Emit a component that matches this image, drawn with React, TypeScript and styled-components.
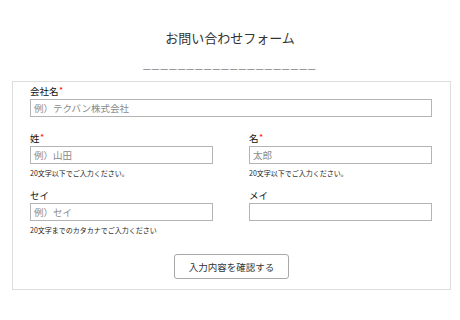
import React from "react";
import styled, { createGlobalStyle } from "styled-components";

const Global = createGlobalStyle`
  html, body { margin: 0; padding: 0; background: #fff; }
  body { font-family: "Noto Sans CJK JP", "Liberation Sans", sans-serif; color: #333; }
  * { box-sizing: border-box; }
`;

const Page = styled.div`
  width: 460px;
  height: 320px;
  padding-top: 30px;
  display: flex;
  flex-direction: column;
`;

const Title = styled.h1`
  margin: 0;
  font-size: 13px;
  line-height: 16px;
  font-weight: normal;
  text-align: center;
  color: #333;
`;

const Rule = styled.div`
  margin-top: 9.5px;
  font-family: "Liberation Sans", sans-serif;
  font-weight: bold;
  font-size: 13px;
  line-height: 16px;
  letter-spacing: 1.45px;
  text-align: center;
  color: #4a4a4a;
`;

const Card = styled.form`
  margin: 9.5px 0 0 12px;
  width: 439px;
  border: 1px solid #ddd;
  padding: 4px 18px 10px 17px;
  display: flex;
  flex-direction: column;
`;

const Field = styled.div<{ $gap?: number }>`
  display: flex;
  flex-direction: column;
  margin-bottom: ${(p) => p.$gap ?? 0}px;
`;

const Row = styled.div<{ $gap?: number }>`
  display: grid;
  grid-template-columns: 1fr 1fr;
  column-gap: 36px;
  margin-bottom: ${(p) => p.$gap ?? 0}px;
`;

const Label = styled.label`
  font-size: 9.5px;
  line-height: 11px;
  height: 11px;
  color: #111;
  margin-bottom: 2px;
`;

const Req = styled.span`
  color: #ff1a1a;
  font-family: "Liberation Sans", sans-serif;
  font-weight: bold;
  font-size: 8px;
  vertical-align: top;
  line-height: 8px;
  margin-left: 1px;
`;

const Input = styled.input`
  display: block;
  width: 100%;
  height: 18px;
  margin: 0;
  padding: 0 3px;
  border: 1px solid #b4b4b4;
  border-radius: 0;
  background: #fff;
  font-family: "Noto Sans CJK JP", "Liberation Sans", sans-serif;
  font-size: 9.5px;
  color: #333;
  outline: none;
  &::placeholder { color: #8a8a8a; }
`;

const Help = styled.p`
  margin: 4px 0 0;
  font-size: 7px;
  line-height: 10px;
  color: #222;
`;

const Actions = styled.div`
  display: flex;
  justify-content: center;
  margin-top: 19px;
  padding-left: 1px;
`;

const Submit = styled.button`
  width: 115px;
  height: 25px;
  background: #fff;
  border: 1px solid #a8a8a8;
  border-radius: 3px;
  font-family: "Noto Sans CJK JP", "Liberation Sans", sans-serif;
  font-size: 9.5px;
  color: #333;
  padding: 0;
`;

export default function App() {
  return (
    <>
      <Global />
      <Page>
        <Title>お問い合わせフォーム</Title>
        <Rule>____________________</Rule>
        <Card onSubmit={(e) => e.preventDefault()}>
          <Field $gap={16}>
            <Label>
              会社名<Req>*</Req>
            </Label>
            <Input placeholder="例）テクバン株式会社" />
          </Field>
          <Row $gap={12}>
            <Field>
              <Label>
                姓<Req>*</Req>
              </Label>
              <Input placeholder="例）山田" />
              <Help>20文字以下でご入力ください。</Help>
            </Field>
            <Field>
              <Label>
                名<Req>*</Req>
              </Label>
              <Input placeholder="太郎" />
              <Help>20文字以下でご入力ください。</Help>
            </Field>
          </Row>
          <Row>
            <Field>
              <Label>セイ</Label>
              <Input placeholder="例）セイ" />
              <Help>20文字までのカタカナでご入力ください</Help>
            </Field>
            <Field>
              <Label>メイ</Label>
              <Input />
            </Field>
          </Row>
          <Actions>
            <Submit type="submit">入力内容を確認する</Submit>
          </Actions>
        </Card>
      </Page>
    </>
  );
}
